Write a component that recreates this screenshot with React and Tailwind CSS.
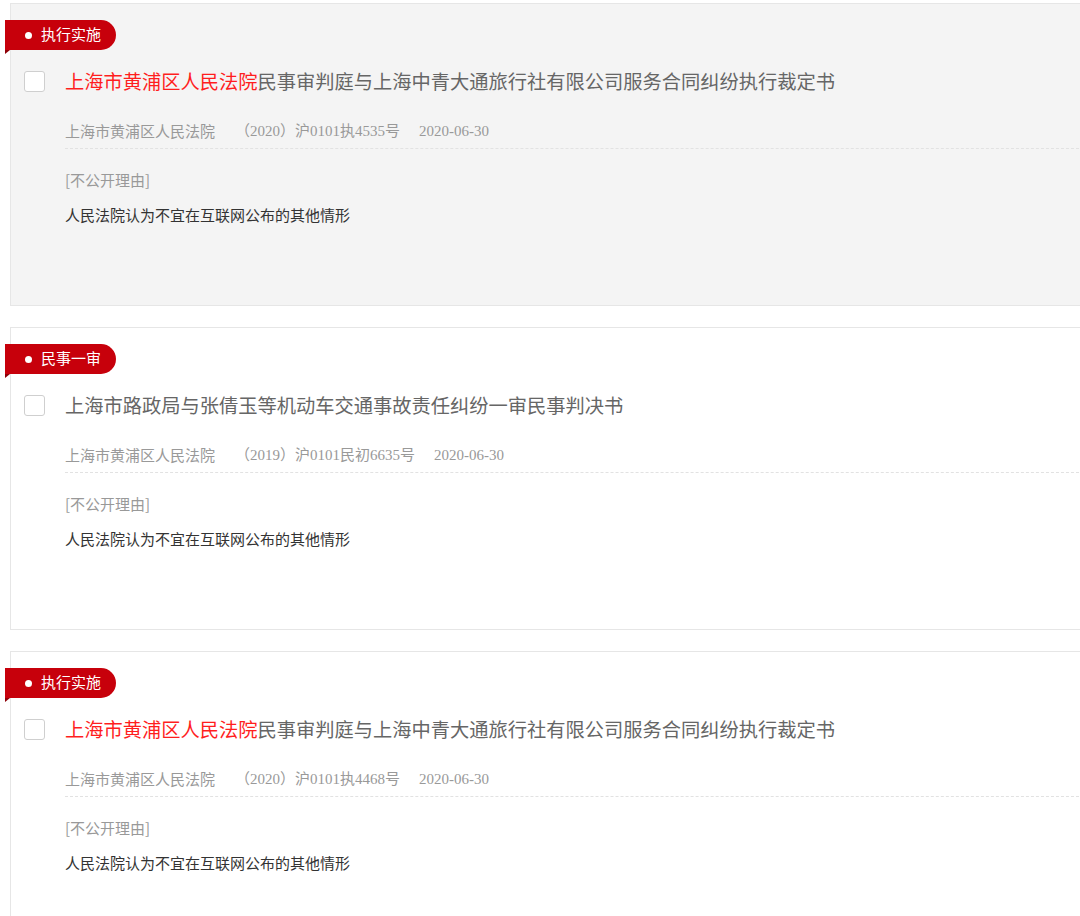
import React from "react";

const items = [
  {
    tag: "执行实施",
    red: "上海市黄浦区人民法院",
    rest: "民事审判庭与上海中青大通旅行社有限公司服务合同纠纷执行裁定书",
    no: "（2020）沪0101执4535号",
    bg: "bg-[#f4f4f4]",
  },
  {
    tag: "民事一审",
    red: "",
    rest: "上海市路政局与张倩玉等机动车交通事故责任纠纷一审民事判决书",
    no: "（2019）沪0101民初6635号",
    bg: "bg-white",
  },
  {
    tag: "执行实施",
    red: "上海市黄浦区人民法院",
    rest: "民事审判庭与上海中青大通旅行社有限公司服务合同纠纷执行裁定书",
    no: "（2020）沪0101执4468号",
    bg: "bg-white",
  },
];

const sans = { fontFamily: '"Noto Sans CJK SC", "Noto Sans", sans-serif' };
const serif = { fontFamily: '"Liberation Serif", "Noto Sans CJK SC", serif' };

function Card({ item }) {
  return (
    <div className={`relative h-[303px] mb-[21px] border border-[#e6e6e6] ${item.bg}`}>
      <div className="absolute top-[16px] left-[-6px] h-[30px] w-[111px] rounded-r-full bg-[#c7000b] flex items-center pl-[20px]">
        <span className="w-[7px] h-[7px] rounded-full bg-white"></span>
        <span className="ml-[9px] -mt-[3px] text-[15px] leading-none text-white" style={sans}>
          {item.tag}
        </span>
        <span className="absolute left-0 top-full w-0 h-0 border-t-[4px] border-t-[#8e0008] border-r-[5px] border-r-transparent"></span>
      </div>
      <div className="pt-[62px] pl-[13px] flex items-center h-[92px]">
        <span className="w-[21px] h-[21px] rounded-[3px] border border-[#cfcfcf] bg-white shrink-0"></span>
        <div className="ml-[20px] text-[19.25px] leading-[30px] whitespace-nowrap text-[#666]" style={sans}>
          {item.red && <span className="text-[#ff1e1e]">{item.red}</span>}
          {item.rest}
        </div>
      </div>
      <div className="ml-[54px] mt-[25px] pb-[7px] border-b border-dashed border-[#e2e2e2] flex items-center h-[28px] text-[15px] leading-[20px] text-[#999] whitespace-nowrap" style={serif}>
        <span style={sans}>上海市黄浦区人民法院</span>
        <span className="ml-[20px]">{item.no}</span>
        <span className="ml-[19px]">2020-06-30</span>
      </div>
      <div className="ml-[54px] mt-[21px] text-[15px] leading-[20px] text-[#999]" style={sans}>
        [不公开理由]
      </div>
      <div className="ml-[54px] mt-[15px] text-[15px] leading-[20px] text-[#333]" style={sans}>
        人民法院认为不宜在互联网公布的其他情形
      </div>
    </div>
  );
}

export default function App() {
  return (
    <div className="w-[1080px] h-[916px] overflow-hidden bg-white">
      <div className="w-[1110px] pl-[10px] pt-[3px]">
        {items.map((it, i) => (
          <Card key={i} item={it} />
        ))}
      </div>
    </div>
  );
}
